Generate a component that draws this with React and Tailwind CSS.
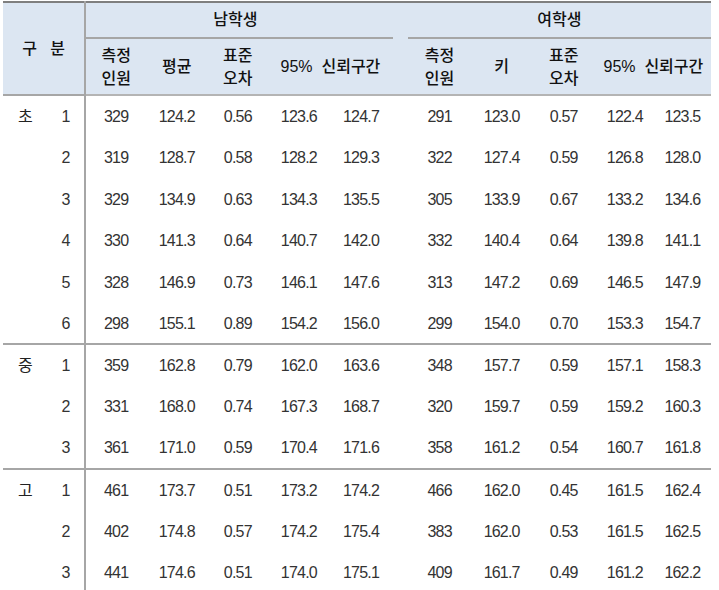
const male = [
  ["초", "1", "329", "124.2", "0.56", "123.6", "124.7", "291", "123.0", "0.57", "122.4", "123.5"],
  ["", "2", "319", "128.7", "0.58", "128.2", "129.3", "322", "127.4", "0.59", "126.8", "128.0"],
  ["", "3", "329", "134.9", "0.63", "134.3", "135.5", "305", "133.9", "0.67", "133.2", "134.6"],
  ["", "4", "330", "141.3", "0.64", "140.7", "142.0", "332", "140.4", "0.64", "139.8", "141.1"],
  ["", "5", "328", "146.9", "0.73", "146.1", "147.6", "313", "147.2", "0.69", "146.5", "147.9"],
  ["", "6", "298", "155.1", "0.89", "154.2", "156.0", "299", "154.0", "0.70", "153.3", "154.7"],
  ["중", "1", "359", "162.8", "0.79", "162.0", "163.6", "348", "157.7", "0.59", "157.1", "158.3"],
  ["", "2", "331", "168.0", "0.74", "167.3", "168.7", "320", "159.7", "0.59", "159.2", "160.3"],
  ["", "3", "361", "171.0", "0.59", "170.4", "171.6", "358", "161.2", "0.54", "160.7", "161.8"],
  ["고", "1", "461", "173.7", "0.51", "173.2", "174.2", "466", "162.0", "0.45", "161.5", "162.4"],
  ["", "2", "402", "174.8", "0.57", "174.2", "175.4", "383", "162.0", "0.53", "161.5", "162.5"],
  ["", "3", "441", "174.6", "0.51", "174.0", "175.1", "409", "161.7", "0.49", "161.2", "162.2"],
];

const widths = [44, 38, 61, 61, 61, 61, 63, 15, 64, 60, 64, 58, 57];

export default function App() {
  return (
    <div className="bg-white w-[719px] h-[590px] overflow-hidden pl-[3px] pt-[1px] font-['Liberation_Sans','Noto_Sans_CJK_KR',sans-serif]">
      <table className="table-fixed border-collapse w-[708px] text-[16px]">
        <colgroup>
          {widths.map((w, i) => (
            <col key={i} style={{ width: w }} />
          ))}
        </colgroup>
        <thead className="bg-[#dce6f2] text-[#111] font-medium">
          <tr className="h-[36px] border-t-2 border-[#7f7f7f]">
            <th rowSpan={2} colSpan={2} className="font-medium border-r-2 border-[#a6a6a6] border-b-2 whitespace-pre">
              {"구   분"}
            </th>
            <th colSpan={5} className="font-medium border-b-2 border-[#a6a6a6] pr-2">남학생</th>
            <th className="border-b-0"></th>
            <th colSpan={5} className="font-medium border-b-2 border-[#a6a6a6]">여학생</th>
          </tr>
          <tr className="h-[57px] border-b-2 border-[#b4b4b4] leading-[23px]">
            <th className="font-medium">측정<br />인원</th>
            <th className="font-medium">평균</th>
            <th className="font-medium">표준<br />오차</th>
            <th colSpan={2} className="font-medium whitespace-pre">{"95%  신뢰구간"}</th>
            <th></th>
            <th className="font-medium">측정<br />인원</th>
            <th className="font-medium">키</th>
            <th className="font-medium">표준<br />오차</th>
            <th colSpan={2} className="font-medium whitespace-pre">{"95%  신뢰구간"}</th>
          </tr>
        </thead>
        <tbody className="text-[#333] tracking-[-0.05em]">
          {male.map((r, i) => (
            <tr
              key={i}
              className={
                "h-[41.5px] " + (i === 5 || i === 8 ? "border-b-2 border-[#a6a6a6]" : "")
              }
            >
              <td className="text-center text-[#222] pt-[2px]">{r[0]}</td>
              <td className="text-center border-r-2 border-[#a6a6a6] pt-[2px]">{r[1]}</td>
              {r.slice(2, 7).map((c, j) => (
                <td key={j} className="text-center pt-[2px]">{c}</td>
              ))}
              <td></td>
              {r.slice(7).map((c, j) => (
                <td key={j} className="text-center pt-[2px]">{c}</td>
              ))}
            </tr>
          ))}
        </tbody>
      </table>
    </div>
  );
}
